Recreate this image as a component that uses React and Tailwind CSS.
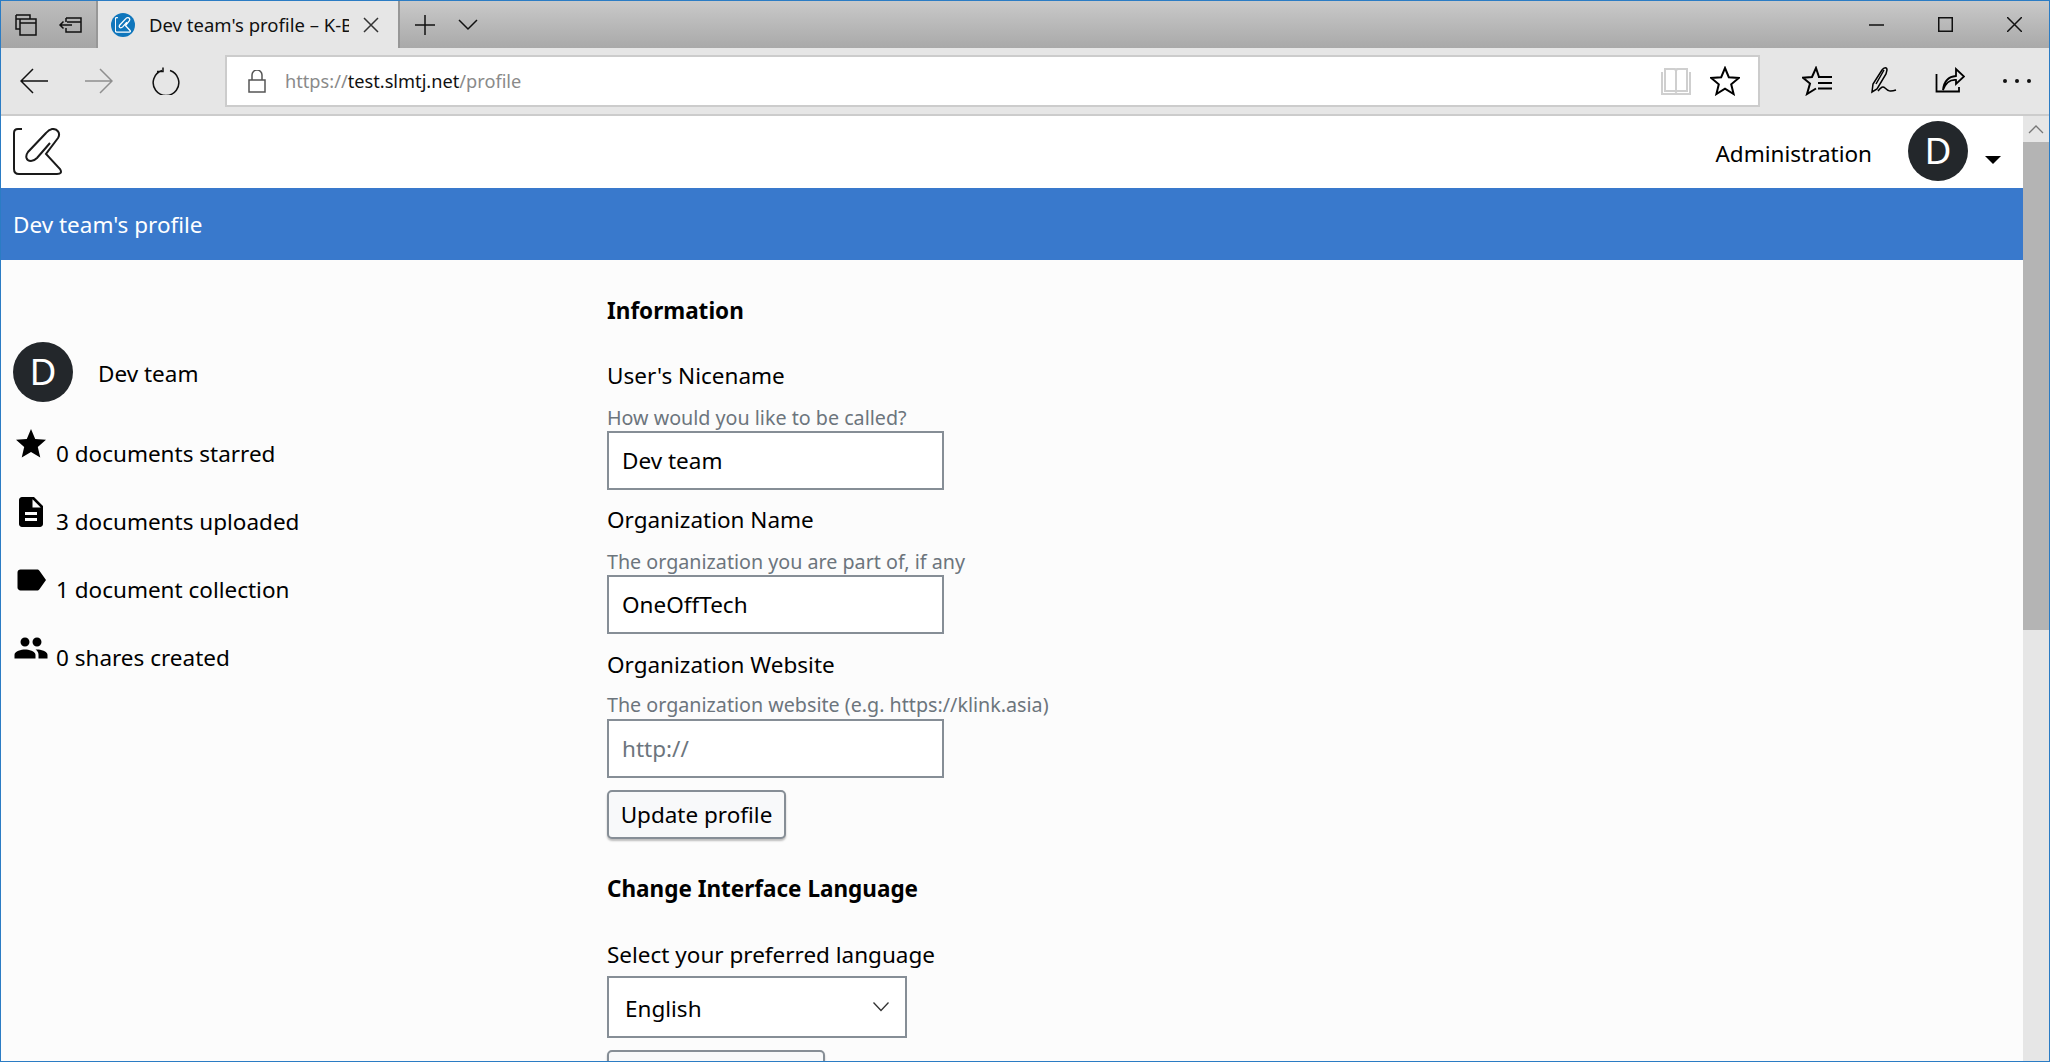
import React from "react";

const stroke = { fill: "none", stroke: "currentColor", strokeWidth: 1.5 };

function Ic({ w, h, cls = "", children }) {
  return (
    <svg width={w} height={h} viewBox={`0 0 ${w} ${h}`} className={"block shrink-0 " + cls}>
      {children}
    </svg>
  );
}

function Logo() {
  return (
    <svg width="50" height="48" viewBox="0 0 50 48" className="block shrink-0 text-[#1a1a1a]">
      <path d="M9 1H5Q1 1 1 5V41Q1 46 6 46H44Q50 46 47 41L33 26L45 10C48 5 44 0.500 39 1C36 1.500 35 2.500 33 5L15 24C12 28 13 33 18 33C21 33 22 32 24 30L37 15" {...stroke} strokeWidth="2" />
    </svg>
  );
}

function Avatar() {
  return (
    <div className="w-[60px] h-[60px] rounded-full bg-[#23272b] text-white flex items-center justify-center text-[37px] leading-none shrink-0 pb-1">D</div>
  );
}

function Stat({ d, children }) {
  return (
    <div className="flex items-start gap-[7px] h-[46px]">
      <svg width="36" height="36" viewBox="0 0 24 24" className="block shrink-0" fill="#000"><path d={d} /></svg>
      <span className="mt-[10px] leading-[36px]">{children}</span>
    </div>
  );
}

function Field({ label, hint, value, placeholder, cls = "mt-[11px]", labelCls = "pt-px", hintCls = "mt-[12px] h-[26px]" }) {
  return (
    <div className={"flex flex-col " + cls}>
      <label className={"leading-[36px] h-[36px] " + labelCls}>{label}</label>
      <div className={"text-[19.7px] leading-[26px] text-[#6c757d] whitespace-nowrap " + hintCls}>{hint}</div>
      <input
        readOnly
        defaultValue={value}
        placeholder={placeholder}
        className="w-[337px] h-[59px] border-2 border-[#868e96] bg-white px-[13px] text-[22.5px] text-black placeholder:text-[#6c757d] outline-none"
      />
    </div>
  );
}

function Btn({ cls, children }) {
  return (
    <button className={"h-[49px] pt-px rounded-[5px] border-2 border-[#868e96] bg-[#f8f9fa] shadow-[0_2px_2px_rgba(0,0,0,0.25)] text-[22.5px] text-black " + cls}>
      {children}
    </button>
  );
}

export default function App() {
  return (
    <div className="h-[1062px] w-[2050px] overflow-hidden border border-[#2b7cc4] flex flex-col font-['Noto_Sans',sans-serif] text-black bg-[#fcfcfc]">
      {/* Title bar */}
      <div className="h-[47px] shrink-0 flex bg-linear-to-b from-[#c9c9c9] to-[#a9a9a9] text-[#111]">
        <div className="w-[97px] flex items-center pl-[14px] gap-[21px] bg-linear-to-b from-[#bdbdbd] to-[#a6a6a6] border-r-2 border-[#979797]">
          <Ic w="22" h="22">
            <path d="M1 1h14v4M1 1v14h4M5 5h16v16H5zM5 9h16M1 5h4" {...stroke} />
          </Ic>
          <Ic w="24" h="20">
            <path d="M8 3h15v14H8v-4M8 7V3M9 7h14M14 10H2M5.500 6.500L2 10l3.500 3.500" {...stroke} />
          </Ic>
        </div>
        <div className="w-[302px] h-full bg-[#e6e6e6] flex items-center pl-[13px] border-r-2 border-[#979797] shrink-0">
          <div className="w-[24px] h-[24px] rounded-full bg-[#0f76bc] flex items-center justify-center shrink-0">
            <svg width="16" height="16" viewBox="0 0 50 48"><path d="M9 1H5Q1 1 1 5V41Q1 46 6 46H44Q50 46 47 41L33 26L45 10C48 5 44 0.500 39 1C36 1.500 35 2.500 33 5L15 24C12 28 13 33 18 33C21 33 22 32 24 30L37 15" fill="none" stroke="#fff" strokeWidth="4" /></svg>
          </div>
          <div className="w-[200px] ml-[14px] overflow-hidden whitespace-nowrap text-[18.5px] leading-[24px]">Dev team's profile – K-Box</div>
          <Ic w="16" h="16" cls="ml-[14px]"><path d="M1 1l14 14M15 1L1 15" {...stroke} stroke="#333" /></Ic>
        </div>
        <div className="flex items-center pl-[15px] gap-[23px]">
          <Ic w="20" h="20"><path d="M10 0v20M0 10h20" {...stroke} /></Ic>
          <Ic w="20" h="12"><path d="M1 1l9 9 9-9" {...stroke} /></Ic>
        </div>
        <div className="ml-auto flex items-center pr-[27px] gap-[54px]">
          <Ic w="15" h="2"><path d="M0 1h15" {...stroke} /></Ic>
          <Ic w="15" h="15"><rect x="0.750" y="0.750" width="13.500" height="13.500" {...stroke} /></Ic>
          <Ic w="15" h="15"><path d="M0 0l15 15M15 0L0 15" {...stroke} /></Ic>
        </div>
      </div>

      {/* Toolbar */}
      <div className="h-[68px] shrink-0 bg-[#e6e6e6] border-b-2 border-[#cccccc] flex items-center">
        <div className="flex items-center pl-[19px]">
          <Ic w="28" h="26" cls="text-[#111]"><path d="M28 13H1M13 1L1 13l12 12" {...stroke} /></Ic>
          <Ic w="28" h="26" cls="ml-[37px] text-[#8f8f8f]"><path d="M0 13h27M15 1l12 12-12 12" {...stroke} /></Ic>
          <Ic w="28" h="28" cls="ml-[39px] text-[#111]"><path d="M10 3.500A12.800 12.800 0 1 0 18 3.500M11 0.500V4.500H5" {...stroke} /></Ic>
        </div>
        <div className="ml-[45px] w-[1535px] h-[52px] bg-white border-2 border-[#cccccc] flex items-center pl-[21px] shrink-0">
          <Ic w="18" h="23" cls="text-[#555]"><path d="M1 10h16v12H1zM4 10V5a5 5 0 0 1 10 0v5" {...stroke} /></Ic>
          <div className="ml-[19px] mt-[2px] text-[18.2px] text-[#8a8a8a] whitespace-nowrap">https://<span className="text-[#111]">test.slmtj.net</span>/profile</div>
          <div className="ml-auto flex items-center pr-[18px] gap-[19px]">
            <Ic w="30" h="28" cls="text-[#cfcfcf]"><path d="M4 2h10l1 2 1-2h10v22H16l-1 1-1-1H4zM15 4v21M1 5v22h28V5" {...stroke} strokeWidth="2" /></Ic>
            <Ic w="30" h="30" cls="text-black"><path d="M15 2l3.800 9.200 10 .7-7.600 6.400 2.400 9.700L15 22.700l-8.600 5.300 2.400-9.700L1.200 11.900l10-.7z" {...stroke} strokeWidth="2" /></Ic>
          </div>
        </div>
        <div className="flex items-center ml-[42px]">
          <Ic w="30" h="30" cls="text-black"><path d="M17 11L14 2L10 11L1 11.700L8 17.500L5 28L14 22.500M16 11H30M16 17H30M16 22.500H30" {...stroke} strokeWidth="2" /></Ic>
          <Ic w="27" h="28" cls="ml-[39px] text-black"><path d="M1 25L2 17L11 3C13 0 16 0 16 3L15 7L6 22ZM5 17L13 3M7 24C10 20 12 19 14 21C17 24 19 25 25 23" {...stroke} /></Ic>
          <Ic w="30" h="28" cls="ml-[37px] text-black"><path d="M1.500 7V24.500H24V20M8 23C9 14 14 9.500 21 9V2L29 9.500L21 17V13C15 12.500 11 15 8 23Z" {...stroke} strokeWidth="1.800" /></Ic>
          <div className="ml-[38px] flex gap-[8px]">
            <span className="w-[4px] h-[4px] rounded-full bg-[#111]" />
            <span className="w-[4px] h-[4px] rounded-full bg-[#111]" />
            <span className="w-[4px] h-[4px] rounded-full bg-[#111]" />
          </div>
        </div>
      </div>

      {/* Page + scrollbar */}
      <div className="flex-1 flex min-h-0">
        <div className="w-[2022px] flex flex-col min-h-0 overflow-hidden text-[22.5px]">
          <header className="h-[72px] shrink-0 bg-white flex items-center pl-[12px]">
            <Logo />
            <span className="ml-auto leading-[36px] mt-[4px]">Administration</span>
            <div className="ml-[36px] mt-[-2px]"><Avatar /></div>
            <div className="ml-[17px] mr-[22px] mt-[15px] w-0 h-0 border-x-[8px] border-x-transparent border-t-[8px] border-t-black" />
          </header>
          <div className="h-[72px] shrink-0 bg-[#3979cc] text-white flex items-center pl-[12px] pt-[2px]">Dev team's profile</div>

          <div className="flex">
            {/* Sidebar */}
            <aside className="w-[606px] shrink-0 pl-[12px] pt-[82px] flex flex-col">
              <div className="flex items-center gap-[25px] h-[60px] mb-[24px]">
                <Avatar />
                <span className="leading-[36px] mt-[3px]">Dev team</span>
              </div>
              <div className="flex flex-col gap-[22px]">
                <Stat d="M12 17.270L18.180 21l-1.640-7.030L22 9.240l-7.190-.61L12 2 9.190 8.630 2 9.240l5.460 4.730L5.820 21z">0 documents starred</Stat>
                <Stat d="M14 2H6c-1.100 0-1.990.9-1.990 2L4 20c0 1.100.89 2 1.990 2H18c1.100 0 2-.9 2-2V8l-6-6zm2 16H8v-2h8v2zm0-4H8v-2h8v2zm-3-5V3.500L18.500 9H13z">3 documents uploaded</Stat>
                <Stat d="M17.630 5.840C17.270 5.330 16.670 5 16 5L5 5.010C3.900 5.010 3 5.900 3 7v10c0 1.100.9 1.990 2 1.990L16 19c.67 0 1.270-.33 1.630-.84L22 12l-4.370-6.160z">1 document collection</Stat>
                <Stat d="M16 11c1.660 0 2.990-1.340 2.990-3S17.660 5 16 5c-1.660 0-3 1.340-3 3s1.340 3 3 3zm-8 0c1.660 0 2.990-1.340 2.990-3S9.660 5 8 5C6.340 5 5 6.340 5 8s1.340 3 3 3zm0 2c-2.330 0-7 1.170-7 3.500V19h14v-2.500c0-2.330-4.670-3.500-7-3.500zm8 0c-.29 0-.62.02-.97.05 1.160.84 1.970 1.970 1.970 3.450V19h6v-2.500c0-2.330-4.670-3.500-7-3.500z">0 shares created</Stat>
              </div>
            </aside>

            {/* Form */}
            <main className="flex flex-col items-start pt-[33px]">
              <h2 className="font-bold leading-[36px]">Information</h2>
              <Field cls="mt-[28px]" label="User's Nicename" hint="How would you like to be called?" value="Dev team" />
              <Field label="Organization Name" hint="The organization you are part of, if any" value="OneOffTech" />
              <Field label="Organization Website" labelCls="pt-[2px]" hintCls="mt-[11px] h-[27px]" hint="The organization website (e.g. https://klink.asia)" placeholder="http://" />
              <Btn cls="w-[179px] mt-[12px]">Update profile</Btn>
              <h2 className="font-bold leading-[36px] mt-[32px]">Change Interface Language</h2>
              <label className="leading-[36px] mt-[30px]">Select your preferred language</label>
              <div className="relative mt-[3px]">
                <select className="w-[300px] h-[62px] pt-[3px] border-2 border-[#868e96] bg-white pl-[16px] appearance-none text-[22.5px] rounded-none outline-none">
                  <option>English</option>
                </select>
                <svg width="16" height="10" viewBox="0 0 16 10" className="absolute right-[18px] top-[26px]"><path d="M0.500 0.500L8 8.500l7.500-8" fill="none" stroke="#333" strokeWidth="1.300" /></svg>
              </div>
              <Btn cls="w-[218px] mt-[12px]">Change language</Btn>
            </main>
          </div>
        </div>

        {/* Scrollbar */}
        <div className="w-[26px] shrink-0 bg-[#e6e6e6] flex flex-col">
          <div className="h-[26px] flex items-center justify-center">
            <svg width="16" height="9" viewBox="0 0 16 9"><path d="M1 8l7-7 7 7" fill="none" stroke="#777" strokeWidth="1.300" /></svg>
          </div>
          <div className="h-[488px] bg-[#b4b4b4]" />
        </div>
      </div>
    </div>
  );
}
